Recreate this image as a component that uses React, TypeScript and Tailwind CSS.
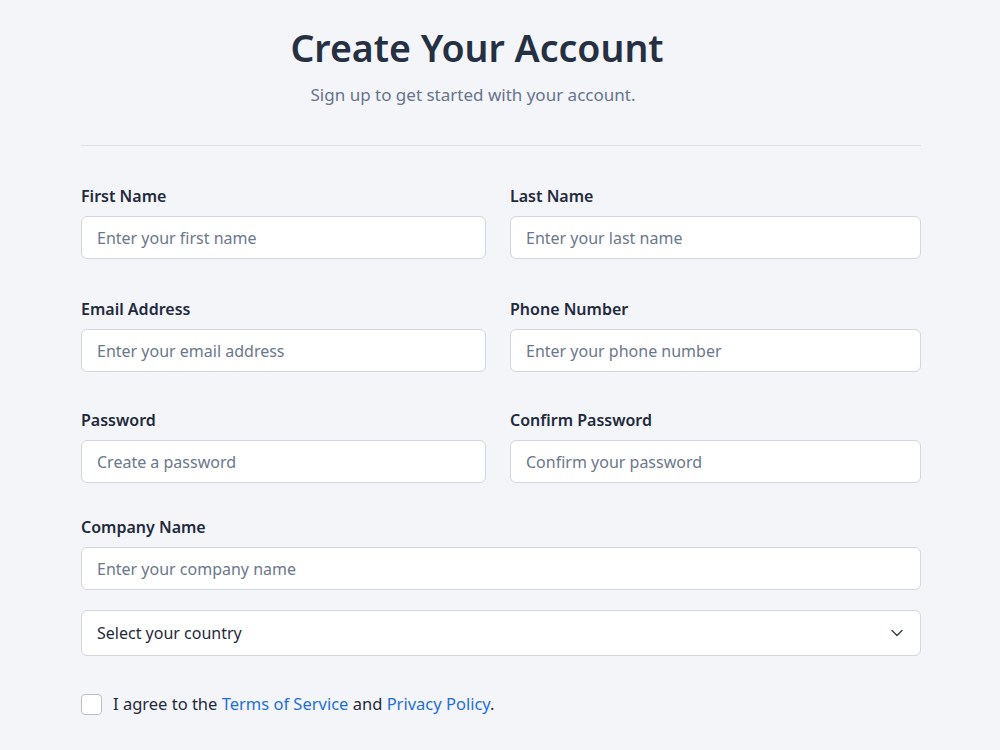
import { ChevronDown } from "lucide-react"

type FieldProps = {
  label: string
  placeholder: string
  type?: string
}

const Field = ({ label, placeholder, type = "text" }: FieldProps) => {
  return (
    <div className="flex flex-col">
      <label className="text-[16px] leading-6 font-semibold text-[#1f2a3d]">{label}</label>
      <input
        type={type}
        placeholder={placeholder}
        className="mt-[8px] h-[43px] w-full rounded-[6px] border border-[#d3d5df] bg-white px-[15px] text-[16px] text-[#1f2a3d] placeholder:text-[#6b778c] outline-none"
      />
    </div>
  )
}

const App = () => {
  return (
    <div
      className="min-h-[750px] w-full bg-[#f4f5f8] text-[#1f2a3d]"
      style={{ fontFamily: '"Noto Sans", "Open Sans", sans-serif' }}
    >
      <div className="ml-[81px] w-[840px] pt-[25px]">
        <div className="flex flex-col items-center">
          <h1 className="text-[37.5px] leading-[46px] font-semibold text-[#253043] -translate-x-[24px]">
            Create Your Account
          </h1>
          <p className="mt-[12px] text-[17px] leading-6 text-[#66748e] -translate-x-[28px]">
            Sign up to get started with your account.
          </p>
        </div>

        <div className="mt-[38px] h-px bg-[#dfe1e7]" />

        <div className="mt-[38px] grid grid-cols-[405px_411px] gap-x-[24px]">
          <Field label="First Name" placeholder="Enter your first name" />
          <Field label="Last Name" placeholder="Enter your last name" />
        </div>

        <div className="mt-[38px] grid grid-cols-[405px_411px] gap-x-[24px]">
          <Field label="Email Address" placeholder="Enter your email address" type="email" />
          <Field label="Phone Number" placeholder="Enter your phone number" type="tel" />
        </div>

        <div className="mt-[36px] grid grid-cols-[405px_411px] gap-x-[24px]">
          <Field label="Password" placeholder="Create a password" type="password" />
          <Field label="Confirm Password" placeholder="Confirm your password" type="password" />
        </div>

        <div className="mt-[32px]">
          <Field label="Company Name" placeholder="Enter your company name" />
        </div>

        <button className="mt-[20px] flex h-[46px] w-full items-center justify-between rounded-[6px] border border-[#d3d5df] bg-white pl-[15px] pr-[13px] text-[16px] text-[#1f2a3d]">
          <span>Select your country</span>
          <ChevronDown className="h-5 w-5 text-[#3a4456]" strokeWidth={1.75} />
        </button>

        <div className="mt-[36px] flex items-center">
          <span className="h-[21px] w-[21px] rounded-[4px] border border-[#b9bdc9] bg-white" />
          <p className="ml-[11px] text-[16.5px] leading-6 text-[#1f2a3d]">
            I agree to the <span className="text-[#1f6fd6]">Terms of Service</span> and{" "}
            <span className="text-[#1f6fd6]">Privacy Policy</span>.
          </p>
        </div>
      </div>
    </div>
  )
}

export default App
